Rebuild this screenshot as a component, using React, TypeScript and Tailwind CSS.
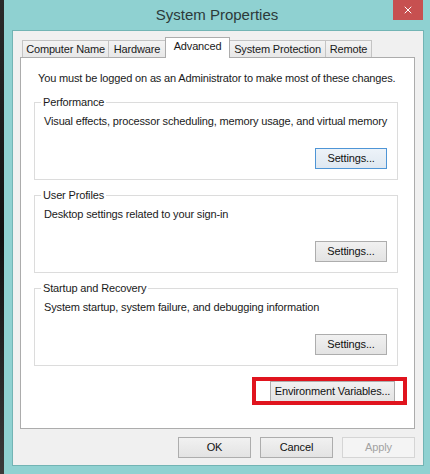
import { X } from "lucide-react";

type BtnProps = { label: string; width: string; focused?: boolean; disabled?: boolean };

function Btn({ label, width, focused, disabled }: BtnProps) {
  return (
    <button
      className={
        "h-[21px] text-[11px] leading-none border whitespace-nowrap " +
        width +
        (disabled
          ? " border-[#d5d5d5] bg-[#f4f4f4] text-[#a2a2a2]"
          : focused
            ? " border-[#4e95d6] bg-gradient-to-b from-[#edf3f9] to-[#dfe8f1] text-[#111]"
            : " border-[#adadad] bg-gradient-to-b from-[#f1f1f1] to-[#e3e3e3] text-[#111]")
      }
    >
      {label}
    </button>
  );
}

function Group({ title, text, focused }: { title: string; text: string; focused?: boolean }) {
  return (
    <fieldset className="border border-[#dcdcdc] pl-[9px] pr-[10px] pb-[10px]">
      <legend className="ml-[-3px] px-[2px] leading-[15px]">{title}</legend>
      <p className="mt-[4px] leading-[15px] whitespace-nowrap">{text}</p>
      <div className="mt-[19px] flex justify-end">
        <Btn label="Settings..." width="w-[72px]" focused={focused} />
      </div>
    </fieldset>
  );
}

const tabs = ["Computer Name", "Hardware", "Advanced", "System Protection", "Remote"];
const tabWidths = ["w-[87px]", "w-[58px]", "w-[65px]", "w-[97px]", "w-[47px]"];

export default function App() {
  return (
    <div className="w-[430px] h-[474px] flex bg-[#8fd1d1] font-['Liberation_Sans',Arial,sans-serif] text-[11px] tracking-[-0.15px] text-[#1a1a1a]">
      {/* desktop wallpaper showing at the left edge */}
      <div className="w-[4px] shrink-0 bg-gradient-to-b from-[#2a2a2a] via-[#111] to-[#3a3a3a]" />

      <div className="flex-1 min-w-0 flex flex-col">
        {/* title bar */}
        <div className="relative h-[30px] flex items-center justify-center">
          <span className="text-[15px] tracking-normal text-[#2c3a3a]">System Properties</span>
          <div className="absolute top-0 right-[7px] w-[30px] h-[20px] bg-[#c75050] flex items-center justify-center">
            <X size={12} strokeWidth={2} className="text-white" />
          </div>
        </div>

        {/* dialog body */}
        <div className="flex-1 ml-[8px] mr-[6px] mb-[8px] border border-[#72b4b4] bg-[#f0f0f0] pt-[6px] pl-[7px] pr-[8px]">
          <div className="flex items-end h-[20px] pl-[2px]">
            {tabs.map((t, i) => {
              const active = t === "Advanced";
              return (
                <div
                  key={t}
                  className={
                    tabWidths[i] +
                    (i > 0 ? " -ml-px" : "") +
                    (active
                      ? " relative z-10 h-[21px] -mb-px bg-white border border-b-0 border-[#acacac] pt-[1px]"
                      : " h-[17px] bg-gradient-to-b from-[#f3f3f3] to-[#e8e8e8] border border-b-0 border-[#c4c4c4] pt-px") +
                    " text-center leading-[15px] whitespace-nowrap"
                  }
                >
                  {t}
                </div>
              );
            })}
          </div>

          <div className="h-[372px] border border-[#acacac] bg-white pl-[13px] pr-[16px] pt-[13px]">
            <p className="ml-[4px] leading-[15px] whitespace-nowrap">
              You must be logged on as an Administrator to make most of these changes.
            </p>

            <div className="mt-[9px] flex flex-col gap-[8px]">
              <Group
                title="Performance"
                text="Visual effects, processor scheduling, memory usage, and virtual memory"
                focused
              />
              <Group title="User Profiles" text="Desktop settings related to your sign-in" />
              <Group
                title="Startup and Recovery"
                text="System startup, system failure, and debugging information"
              />
            </div>

            <div className="mt-[15px] flex justify-end pr-[3px]">
              <div className="relative">
                <Btn label="Environment Variables..." width="w-[125px]" />
                <span className="absolute -left-[18px] -right-[12px] -top-[4px] -bottom-[3px] border-[4px] border-[#e0141e]" />
              </div>
            </div>
          </div>

          <div className="mt-[8px] flex justify-end gap-[9px]">
            <Btn label="OK" width="w-[73px]" />
            <Btn label="Cancel" width="w-[73px]" />
            <Btn label="Apply" width="w-[73px]" disabled />
          </div>
        </div>
      </div>
    </div>
  );
}
